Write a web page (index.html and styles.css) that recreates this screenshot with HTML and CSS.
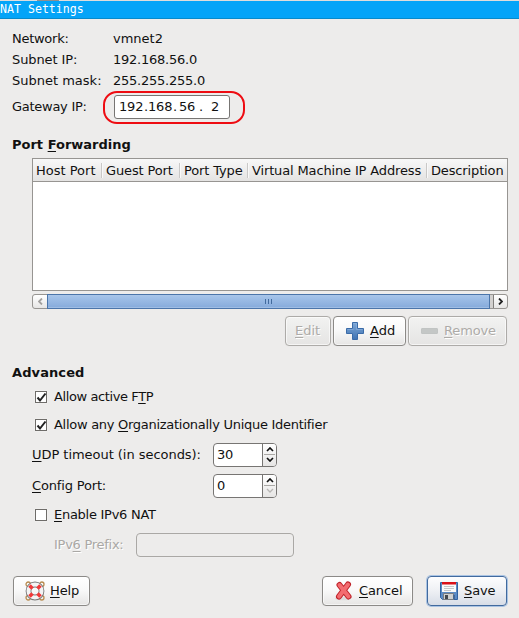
FILE: index.html
```html
<!DOCTYPE html>
<html lang="en">
<head>
<meta charset="utf-8">
<title>NAT Settings</title>
<link rel="stylesheet" href="styles.css">
</head>
<body>
<header class="titlebar">NAT Settings</header>
<main class="dialog">
  <section class="info">
    <div class="info-row"><span class="label tight">Network:</span><span>vmnet2</span></div>
    <div class="info-row"><span class="label snug">Subnet IP:</span><span class="value">192.168.56.0</span></div>
    <div class="info-row"><span class="label">Subnet mask:</span><span class="value">255.255.255.0</span></div>
    <div class="info-row gateway"><span class="label tight">Gateway IP:</span>
      <div class="ip-field"><span class="o1">192</span><span class="d1">.</span><span class="o2">168</span><span class="d2">.</span><span class="o3">56</span><span class="d3">.</span><span class="o4">2</span><i class="ring"></i></div>
    </div>
  </section>

  <h2 class="heading ports-title">Port <u>F</u>orwarding</h2>
  <section class="ports">
    <div class="table">
      <div class="thead"><span>Host Port</span><span>Guest Port</span><span>Port Type</span><span>Virtual Machine IP Address</span><span>Description</span></div>
    </div>
    <div class="scrollbar">
      <div class="arrow left"><svg width="5" height="7" viewBox="0 0 5 7"><path d="M4 .5 1 3.500l3 3"/></svg></div>
      <div class="thumb"><i></i><i></i><i></i></div>
      <div class="arrow right"><svg width="5" height="7" viewBox="0 0 5 7"><path d="m1 .5 3 3-3 3"/></svg></div>
    </div>
    <div class="actions">
      <div class="button edit disabled"><span><u>E</u>dit</span></div>
      <div class="button add">
        <svg width="20" height="20" viewBox="0 0 20 20"><defs><linearGradient id="plus" x2="0" y2="1"><stop stop-color="#7fa8d6"/><stop offset="1" stop-color="#3f73b3"/></linearGradient></defs><path d="M7.500 1.500h5v6h6v5h-6v6h-5v-6h-6v-5h6z" fill="url(#plus)" stroke="#3a6ba8"/><path d="M8.500 2.500h3v6h6M2.500 8.500h6" fill="none" stroke="#8fb4de" opacity=".6"/></svg>
        <span><u>A</u>dd</span></div>
      <div class="button remove disabled">
        <svg width="20" height="20" viewBox="0 0 20 20"><rect x="1.500" y="7.500" width="16" height="5" rx=".5" fill="#c4c7c6" stroke="#c1c4c3"/></svg>
        <span><u>R</u>emove</span></div>
    </div>
  </section>

  <h2 class="heading advanced-title">Advanced</h2>
  <section class="advanced">
    <div class="check-row"><i class="box"><svg width="11" height="11" viewBox="0 0 11 11"><path d="m1.500 5.500 2.500 3L9.500 1.500"/></svg></i><span class="ftp">Allow active F<u>T</u>P</span></div>
    <div class="check-row second"><i class="box"><svg width="11" height="11" viewBox="0 0 11 11"><path d="m1.500 5.500 2.500 3L9.500 1.500"/></svg></i><span class="oui">Allow any <u>O</u>rganizationally Unique Identifier</span></div>
    <div class="spin-row"><span class="spin-label udp"><u>U</u>DP timeout (in seconds):</span>
      <div class="spin"><span>30</span><div class="steps"><svg viewBox="0 0 8 5"><path d="m1 4 3-3 3 3"/></svg><svg viewBox="0 0 8 5"><path d="m1 1 3 3 3-3"/></svg></div></div></div>
    <div class="spin-row"><span class="spin-label config"><u>C</u>onfig Port:</span>
      <div class="spin"><span>0</span><div class="steps"><svg viewBox="0 0 8 5"><path d="m1 4 3-3 3 3"/></svg><svg class="off" viewBox="0 0 8 5"><path d="m1 1 3 3 3-3"/></svg></div></div></div>
    <div class="check-row ipv6"><i class="box"></i><span class="tight"><u>E</u>nable IPv6 NAT</span></div>
    <div class="prefix-row"><span class="muted tight">IPv<u>6</u> Prefix:</span><div class="prefix-field"></div></div>
  </section>

  <footer class="footer">
    <div class="button help">
      <svg width="20" height="20" viewBox="0 0 20 20"><g fill="none"><g stroke="#b98d52" stroke-width="1.300"><circle cx="3.200" cy="3.200" r="2.200"/><circle cx="16.800" cy="3.200" r="2.200"/><circle cx="3.200" cy="16.800" r="2.200"/><circle cx="16.800" cy="16.800" r="2.200"/></g><circle cx="10" cy="10" r="6.500" stroke="#777" stroke-width="5.800"/><circle cx="10" cy="10" r="6.500" stroke="#f4f4f4" stroke-width="4"/><path d="m4.500 4.500 3 3m5 5 3 3m0-11-3 3m-5 5-3 3" stroke="#f23838" stroke-width="3.600"/></g></svg>
      <span><u>H</u>elp</span></div>
    <div class="button cancel">
      <svg width="20" height="20" viewBox="0 0 20 20"><ellipse cx="9" cy="17.500" rx="8" ry="1.800" fill="#dcdcdc"/><path d="M5.500 4 14.500 15.500M14 3.500 5 15.500" fill="none" stroke="#bf2229" stroke-width="6" stroke-linejoin="round" stroke-linecap="round"/><path d="M5.500 4 14.500 15.500M14 3.500 5 15.500" fill="none" stroke="#f36c70" stroke-width="4" stroke-linecap="round"/></svg>
      <span><u>C</u>ancel</span></div>
    <div class="button save">
      <svg width="20" height="20" viewBox="0 0 20 20"><path d="M1.500 1.500h17v17h-15l-2-2z" fill="#5b8bc6" stroke="#3263a1"/><path d="M3 1h14v10H3z" fill="#fafafa"/><path d="M3 1h14v2.500H3z" fill="#da1018"/><path d="M5 5.500h10M5 7.500h10M5 9.500h7" stroke="#c4c7ca"/><path d="M4.500 12.500h10v6h-10z" fill="#ced0d0" stroke="#777c82"/><path d="M6 14h3v4H6z" fill="#42484f"/><path d="M14 14h2v4h-2z" fill="#456895"/></svg>
      <span><u>S</u>ave</span></div>
  </footer>
</main>
</body>
</html>
```
FILE: styles.css
```css
* { box-sizing: border-box; }
body { margin: 0; height: 618px; overflow: hidden; background: #edeceb; color: #111; font: 13px/16px "DejaVu Sans", sans-serif; }
span { white-space: pre; }
u { text-decoration: underline; text-decoration-thickness: 1px; text-underline-offset: 2px; text-decoration-skip-ink: none; }
svg { display: block; flex: none; }
.tight { letter-spacing: -0.27px; }
.snug { letter-spacing: -0.1px; }
.value { letter-spacing: -0.24px; }
.ftp { letter-spacing: -0.4px; }
.oui { letter-spacing: -0.28px; }
.udp { letter-spacing: -0.04px; }
.config { letter-spacing: -0.16px; }
.titlebar { height: 19px; border-top: 1px solid #dedddc; border-image: linear-gradient(90deg, #dedddc 38px, #8f8f8f 38px, #8f8f8f 60px, #dedddc 60px) 1; border-image-width: 1px 0 0; background: #04a4f8; box-shadow: inset 0 -1px #078acb; color: #fff; font: 11.6px/16px "DejaVu Sans Mono", monospace; }
.dialog { display: flex; flex-direction: column; }
.info { padding: 9px 0 0 12px; }
.info-row { display: flex; align-items: center; height: 21px; }
.label { width: 101px; }
.gateway { height: 31px; }
.ip-field { position: relative; display: flex; align-items: center; width: 116px; height: 24px; margin-left: 1px; padding-left: 4px; border: 1px solid #777573; border-radius: 3px; background: #fff; letter-spacing: -0.2px; }
.ring { position: absolute; left: -12px; top: -5px; width: 142px; height: 33px; border: 2px solid #ee0c12; border-radius: 14px; }
.o1, .o2 { width: 25px; }
.d1 { width: 4px; }
.d2 { width: 6px; }
.o3 { width: 20px; }
.d3 { width: 12px; }
.heading { margin: 0; padding-left: 12px; font-size: 13px; line-height: 16px; }
.ports-title { margin-top: 15px; }
.ports { margin: 5px 11px 0 32px; }
.table { height: 133px; border: 1px solid #979592; background: #fff; }
.thead { display: flex; align-items: center; height: 23px; border-bottom: 1px solid #979592; background: linear-gradient(#f8f8f8, #e4e3e2); }
.thead span { height: 15px; line-height: 15px; padding-left: 4px; border-left: 1px solid #c9c8c7; box-shadow: inset 1px 0 #f9f9f9; letter-spacing: -0.14px; }
.thead span:nth-child(1) { width: 68px; padding-left: 3px; border: 0; box-shadow: none; letter-spacing: 0; }
.thead span:nth-child(2) { width: 78px; }
.thead span:nth-child(3) { width: 68px; }
.thead span:nth-child(4) { width: 179px; }
.scrollbar { display: flex; width: 476px; height: 15px; margin-top: 3px; border: 1px solid #979592; border-radius: 3px; background: #d3d1cf; }
.arrow { display: flex; align-items: center; justify-content: center; width: 14px; background: linear-gradient(#fff, #e7e6e5); }
.arrow path { fill: none; stroke: #222; stroke-width: 1.8; }
.left { border-radius: 3px 0 0 3px; }
.left path { stroke: #a3a19f; }
.right { margin-left: 3px; border-left: 1px solid #807e7b; border-radius: 0 3px 3px 0; }
.thumb { display: flex; align-items: center; justify-content: center; gap: 2px; flex: 1; margin: -1px 0; border: 1px solid #4b75aa; background: linear-gradient(#a7c5ea, #85aadb); box-shadow: inset 0 1px #a9c5e8, inset 0 -1px #9fbde4; }
.thumb i { width: 1px; height: 5px; background: #426b9e; }
.actions { display: flex; justify-content: flex-end; gap: 2px; height: 30px; margin: 7px 1px 0 0; }
.button { display: flex; align-items: center; height: 30px; padding-left: 11px; gap: 5px; border: 1px solid #8c8a87; border-radius: 4px; background: linear-gradient(#fff, #f8f8f8 50%, #e6e5e4); box-shadow: inset 0 0 0 1px #fff9, 0 0 1px #dddcdb; color: #111; }
.disabled { border-color: #adaba8; background: linear-gradient(#f2f2f1, #e5e4e3); color: #adaba8; text-shadow: 1px 1px #fff; }
.edit { width: 46px; padding-left: 9px; }
.add { width: 73px; }
.remove { width: 99px; gap: 4px; letter-spacing: -0.15px; }
.advanced-title { margin-top: 19px; letter-spacing: 0.1px; }
.advanced { padding-left: 32px; }
.check-row { display: flex; align-items: center; gap: 6px; height: 28px; margin-top: 2px; padding-left: 3px; }
.box { display: block; width: 12px; height: 12px; border: 1px solid #6e6c69; background: #fff; box-shadow: 0 0 1px #fff; margin-right: 1px; }
.box svg { margin: -0.5px; }
.box path { fill: none; stroke: #222; stroke-width: 2; }
.second { margin: 0 0 4px; }
.spin-row { display: flex; height: 24px; align-items: center; margin-bottom: 7px; }
.spin-label { width: 181px; }
.spin { display: flex; align-items: center; width: 64px; height: 24px; border: 1px solid #777573; border-radius: 4px; background: #fff; overflow: hidden; }
.spin > span { width: 48px; padding-left: 3px; letter-spacing: -0.3px; }
.steps { flex: 1; height: 22px; border-left: 1px solid #777573; background-image: linear-gradient(#aaa8a5, #aaa8a5), linear-gradient(#fff, #e6e5e4); background-size: 11px 1px, 100% 100%; background-position: 1px 10px, 0 0; background-repeat: no-repeat; }
.steps svg { width: 8px; height: 5px; margin: 3px auto 0 3px; }
.steps svg + svg { margin-top: 5px; }
.steps path { fill: none; stroke: #111; stroke-width: 1.7; }
.steps .off path { stroke: #b8b6b4; stroke-width: 1.3; }
.ipv6 { margin-top: -4px; }
.prefix-row { display: flex; align-items: center; height: 24px; margin-top: 4px; padding-left: 22px; }
.muted { width: 82px; color: #aaa8a5; text-shadow: 1px 1px #fff; }
.prefix-field { width: 158px; height: 24px; border: 1px solid #aaa8a5; border-radius: 4px; box-shadow: 0 0 1px #fff; }
.footer { display: flex; margin: 19px 12px 0 13px; letter-spacing: -0.1px; }
.help { width: 77px; }
.cancel { width: 91px; margin-left: auto; }
.save { width: 80px; margin-left: 14px; border-color: #416a9e; background: linear-gradient(#fdfdfe, #eef0f4 50%, #d7dde7); box-shadow: 0 0 0 1px #a9c3e3; }
```
